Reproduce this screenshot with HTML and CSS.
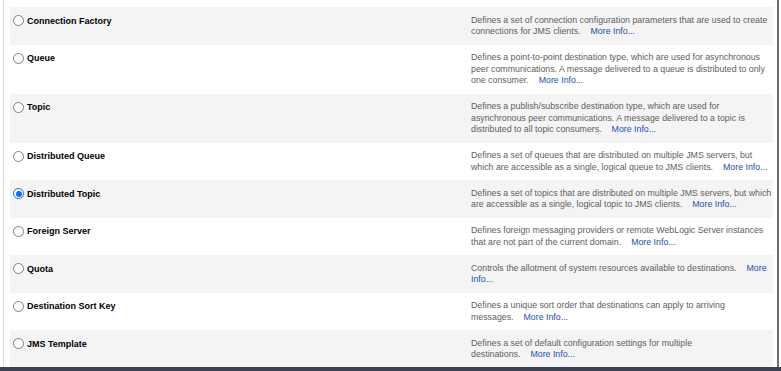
FILE: index.html
```html
<!DOCTYPE html>
<html>
<head>
<meta charset="utf-8">
<link rel="stylesheet" href="styles.css">
</head>
<body>
<div class="frame">
  <div class="list">
    <div class="row shaded">
      <label class="name"><input type="radio" name="t" class="radio"><span>Connection Factory</span></label>
      <div class="desc">Defines a set of connection configuration parameters that are used to create connections for JMS clients.<a class="more" href="#">More Info...</a></div>
    </div>
    <div class="row">
      <label class="name"><input type="radio" name="t" class="radio"><span>Queue</span></label>
      <div class="desc">Defines a point-to-point destination type, which are used for asynchronous peer communications. A message delivered to a queue is distributed to only one consumer.<a class="more" href="#">More Info...</a></div>
    </div>
    <div class="row shaded">
      <label class="name"><input type="radio" name="t" class="radio"><span>Topic</span></label>
      <div class="desc">Defines a publish/subscribe destination type, which are used for asynchronous peer communications. A message delivered to a topic is distributed to all topic consumers.<a class="more" href="#">More Info...</a></div>
    </div>
    <div class="row">
      <label class="name"><input type="radio" name="t" class="radio"><span>Distributed Queue</span></label>
      <div class="desc">Defines a set of queues that are distributed on multiple JMS servers, but which are accessible as a single, logical queue to JMS clients.<a class="more" href="#">More Info...</a></div>
    </div>
    <div class="row shaded">
      <label class="name"><input type="radio" name="t" class="radio" checked><span>Distributed Topic</span></label>
      <div class="desc">Defines a set of topics that are distributed on multiple JMS servers, but which are accessible as a single, logical topic to JMS clients.<a class="more" href="#">More Info...</a></div>
    </div>
    <div class="row">
      <label class="name"><input type="radio" name="t" class="radio"><span>Foreign Server</span></label>
      <div class="desc">Defines foreign messaging providers or remote WebLogic Server instances that are not part of the current domain.<a class="more" href="#">More Info...</a></div>
    </div>
    <div class="row shaded">
      <label class="name"><input type="radio" name="t" class="radio"><span>Quota</span></label>
      <div class="desc">Controls the allotment of system resources available to destinations.<a class="more" href="#">More Info...</a></div>
    </div>
    <div class="row">
      <label class="name"><input type="radio" name="t" class="radio"><span>Destination Sort Key</span></label>
      <div class="desc">Defines a unique sort order that destinations can apply to arriving messages.<a class="more" href="#">More Info...</a></div>
    </div>
    <div class="row shaded">
      <label class="name"><input type="radio" name="t" class="radio"><span>JMS Template</span></label>
      <div class="desc">Defines a set of default configuration settings for multiple destinations.<a class="more" href="#">More Info...</a></div>
    </div>
  </div>
</div>
<div class="bottombar"></div>
</body>
</html>
```

FILE: styles.css
```css
html, body {
  margin: 0;
  padding: 0;
  background: #ffffff;
}
body {
  width: 781px;
  height: 371px;
  overflow: hidden;
  font-family: "Liberation Sans", Arial, sans-serif;
}
.frame {
  margin-left: 3px;
  width: 773px;
  height: 367px;
  border-left: 1px solid #dcdcdc;
  border-right: 2px solid #6e6e6e;
  box-sizing: content-box;
  overflow: hidden;
}
.list {
  padding: 7px 4px 0 6px;
}
.row {
  display: grid;
  grid-template-columns: 461px 1fr;
  padding: 7.5px 0 7px 0;
}
.row.shaded {
  background: #f4f4f4;
}
.name {
  display: flex;
  align-items: center;
  height: 12px;
  padding-left: 3px;
  font-size: 9px;
  font-weight: bold;
  color: #000;
}
.radio {
  appearance: none;
  -webkit-appearance: none;
  width: 11px;
  height: 11px;
  margin: 0 3px 0 0;
  border: 1px solid #808080;
  border-radius: 50%;
  background: #fff;
  box-sizing: border-box;
  position: relative;
  flex: none;
}
.radio:checked {
  border: 1px solid #1a6fe0;
}
.radio:checked::after {
  content: "";
  position: absolute;
  left: 1.5px;
  top: 1.5px;
  width: 6px;
  height: 6px;
  border-radius: 50%;
  background: #1a6fe0;
}
.desc {
  font-size: 8.8px;
  line-height: 11.5px;
  color: #5e5e5e;
}
.more {
  color: #2451ad;
  text-decoration: none;
  margin-left: 10px;
}
.bottombar {
  height: 4px;
  background: #3c4350;
}
```
